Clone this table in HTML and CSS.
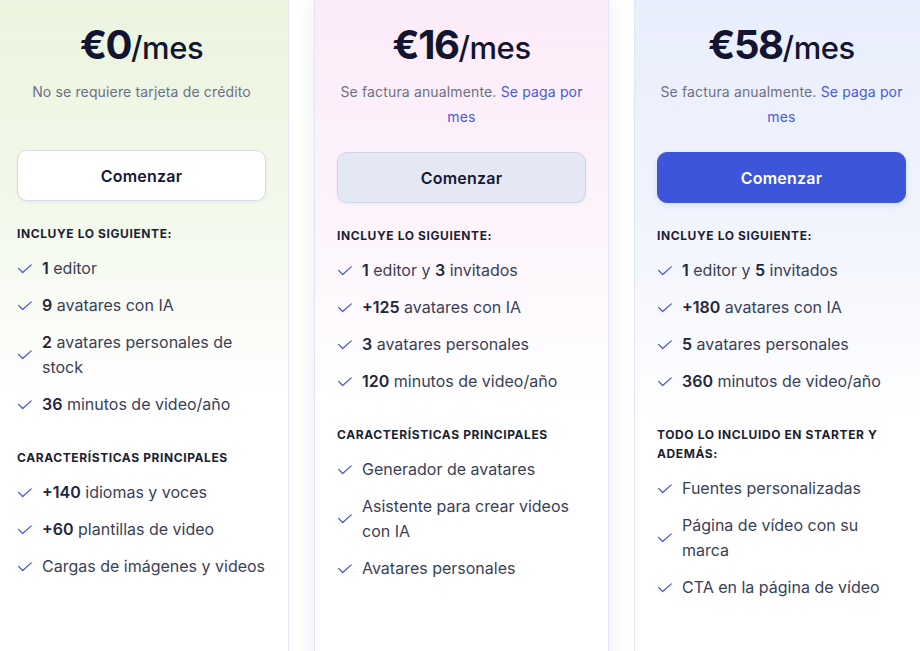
FILE: index.html
```html
<!DOCTYPE html>
<html lang="es">
<head>
<meta charset="utf-8">
<title>Planes</title>
<link rel="stylesheet" href="styles.css">
</head>
<body>
<div class="plans">
  <section class="card card--free">
    <h2 class="price"><span class="amount">€0</span><span class="per">/mes</span></h2>
    <p class="sub sub--single">No se requiere tarjeta de crédito</p>
    <button class="btn btn--light">Comenzar</button>
    <h3 class="group">Incluye lo siguiente:</h3>
    <ul class="feats">
      <li><svg class="chk" viewBox="0 0 15 10"><path d="M0.6 4.4 L5 8.8 L14.2 0.6"/></svg><span><b>1</b> editor</span></li>
      <li><svg class="chk" viewBox="0 0 15 10"><path d="M0.6 4.4 L5 8.8 L14.2 0.6"/></svg><span><b>9</b> avatares con IA</span></li>
      <li><svg class="chk" viewBox="0 0 15 10"><path d="M0.6 4.4 L5 8.8 L14.2 0.6"/></svg><span><b>2</b> avatares personales de stock</span></li>
      <li><svg class="chk" viewBox="0 0 15 10"><path d="M0.6 4.4 L5 8.8 L14.2 0.6"/></svg><span><b>36</b> minutos de video/año</span></li>
    </ul>
    <h3 class="group">Características principales</h3>
    <ul class="feats">
      <li><svg class="chk" viewBox="0 0 15 10"><path d="M0.6 4.4 L5 8.8 L14.2 0.6"/></svg><span><b>+140</b> idiomas y voces</span></li>
      <li><svg class="chk" viewBox="0 0 15 10"><path d="M0.6 4.4 L5 8.8 L14.2 0.6"/></svg><span><b>+60</b> plantillas de video</span></li>
      <li><svg class="chk" viewBox="0 0 15 10"><path d="M0.6 4.4 L5 8.8 L14.2 0.6"/></svg><span>Cargas de imágenes y videos</span></li>
    </ul>
  </section>

  <section class="card card--starter">
    <h2 class="price"><span class="amount">€16</span><span class="per">/mes</span></h2>
    <p class="sub">Se factura anualmente. <a class="link" href="#">Se paga por mes</a></p>
    <button class="btn btn--soft">Comenzar</button>
    <h3 class="group">Incluye lo siguiente:</h3>
    <ul class="feats">
      <li><svg class="chk" viewBox="0 0 15 10"><path d="M0.6 4.4 L5 8.8 L14.2 0.6"/></svg><span><b>1</b> editor y <b>3</b> invitados</span></li>
      <li><svg class="chk" viewBox="0 0 15 10"><path d="M0.6 4.4 L5 8.8 L14.2 0.6"/></svg><span><b>+125</b> avatares con IA</span></li>
      <li><svg class="chk" viewBox="0 0 15 10"><path d="M0.6 4.4 L5 8.8 L14.2 0.6"/></svg><span><b>3</b> avatares personales</span></li>
      <li><svg class="chk" viewBox="0 0 15 10"><path d="M0.6 4.4 L5 8.8 L14.2 0.6"/></svg><span><b>120</b> minutos de video/año</span></li>
    </ul>
    <h3 class="group">Características principales</h3>
    <ul class="feats">
      <li><svg class="chk" viewBox="0 0 15 10"><path d="M0.6 4.4 L5 8.8 L14.2 0.6"/></svg><span>Generador de avatares</span></li>
      <li><svg class="chk" viewBox="0 0 15 10"><path d="M0.6 4.4 L5 8.8 L14.2 0.6"/></svg><span>Asistente para crear videos con IA</span></li>
      <li><svg class="chk" viewBox="0 0 15 10"><path d="M0.6 4.4 L5 8.8 L14.2 0.6"/></svg><span>Avatares personales</span></li>
    </ul>
  </section>

  <section class="card card--pro">
    <h2 class="price"><span class="amount">€58</span><span class="per">/mes</span></h2>
    <p class="sub">Se factura anualmente. <a class="link" href="#">Se paga por mes</a></p>
    <button class="btn btn--primary">Comenzar</button>
    <h3 class="group">Incluye lo siguiente:</h3>
    <ul class="feats">
      <li><svg class="chk" viewBox="0 0 15 10"><path d="M0.6 4.4 L5 8.8 L14.2 0.6"/></svg><span><b>1</b> editor y <b>5</b> invitados</span></li>
      <li><svg class="chk" viewBox="0 0 15 10"><path d="M0.6 4.4 L5 8.8 L14.2 0.6"/></svg><span><b>+180</b> avatares con IA</span></li>
      <li><svg class="chk" viewBox="0 0 15 10"><path d="M0.6 4.4 L5 8.8 L14.2 0.6"/></svg><span><b>5</b> avatares personales</span></li>
      <li><svg class="chk" viewBox="0 0 15 10"><path d="M0.6 4.4 L5 8.8 L14.2 0.6"/></svg><span><b>360</b> minutos de video/año</span></li>
    </ul>
    <h3 class="group">Todo lo incluido en Starter y además:</h3>
    <ul class="feats">
      <li><svg class="chk" viewBox="0 0 15 10"><path d="M0.6 4.4 L5 8.8 L14.2 0.6"/></svg><span>Fuentes personalizadas</span></li>
      <li><svg class="chk" viewBox="0 0 15 10"><path d="M0.6 4.4 L5 8.8 L14.2 0.6"/></svg><span>Página de vídeo con su marca</span></li>
      <li><svg class="chk" viewBox="0 0 15 10"><path d="M0.6 4.4 L5 8.8 L14.2 0.6"/></svg><span>CTA en la página de vídeo</span></li>
    </ul>
  </section>
</div>
</body>
</html>
```
FILE: styles.css
```css
* { box-sizing: border-box; }
html, body { margin: 0; padding: 0; }
body {
  background: #ffffff;
  font-family: Inter, "Noto Sans", "Liberation Sans", sans-serif;
  color: #3a3f57;
  overflow: hidden;
  height: 651px;
}
.plans {
  display: flex;
  gap: 25px;
  margin-left: -6px;
  height: 700px;
}
.card {
  flex: 0 0 295px;
  padding: 21px 22px 0;
  border-left: 1px solid #dfe5f8;
  border-right: 1px solid #dfe5f8;
}
.card--free {
  border-left-color: transparent;
  background: linear-gradient(180deg, #ebf5de 0px, #f2f8ea 200px, #ffffff 400px);
}
.card--starter {
  background: linear-gradient(180deg, #fcebf9 0px, #fdf3fb 200px, #ffffff 400px);
  box-shadow: 0 0 22px rgba(30, 30, 60, 0.08);
  position: relative;
}
.card--pro {
  border-right-color: transparent;
  background: linear-gradient(180deg, #e9eefc 0px, #f1f4fd 220px, #ffffff 420px);
}
.price {
  margin: 0;
  text-align: center;
  line-height: 48px;
  color: #131530;
  white-space: nowrap;
}
.amount {
  font-size: 40px;
  font-weight: 700;
  letter-spacing: -1.5px;
}
.per {
  font-size: 31px;
  font-weight: 500;
  letter-spacing: -0.4px;
}
.sub {
  margin: 4px 0 0;
  min-height: 50px;
  text-align: center;
  font-size: 14px;
  line-height: 25px;
  letter-spacing: 0.15px;
  color: #6b7086;
}
.sub--single { min-height: 48px; }
.link {
  color: #4a5ad9;
  text-decoration: none;
}
.btn {
  display: block;
  width: 100%;
  height: 51px;
  margin-top: 23px;
  border-radius: 10px;
  font-family: inherit;
  font-size: 16px;
  font-weight: 600;
  letter-spacing: 0.2px;
  cursor: pointer;
}
.btn--light {
  background: #ffffff;
  border: 1px solid #d6dbea;
  color: #161833;
  box-shadow: 0 1px 3px rgba(30, 40, 80, 0.06);
}
.btn--soft {
  background: #e4e8f4;
  border: 1px solid #cfd5e6;
  color: #161833;
  box-shadow: 0 1px 3px rgba(30, 40, 80, 0.06);
}
.btn--primary {
  background: #3d55d9;
  border: 1px solid #3d55d9;
  color: #ffffff;
  box-shadow: 0 2px 6px rgba(61, 85, 217, 0.15);
}
.group {
  margin: 23px 0 0;
  font-size: 12px;
  font-weight: 700;
  line-height: 19px;
  letter-spacing: 0.6px;
  text-transform: uppercase;
  color: #1c1e33;
}
.feats + .group { margin-top: 31px; }
.feats {
  list-style: none;
  margin: 13px 0 0;
  padding: 0;
  display: flex;
  flex-direction: column;
  gap: 12px;
}
.feats li {
  display: flex;
  align-items: center;
  gap: 10px;
  font-size: 16px;
  line-height: 25px;
  letter-spacing: 0;
  color: #3a3f57;
}
.feats b {
  font-weight: 600;
  color: #22263b;
}
.chk {
  flex: 0 0 14px;
  width: 14px;
  height: 10px;
  margin-left: 1px;
  fill: none;
  stroke: #4454dc;
  stroke-width: 1.3;
  stroke-linecap: round;
  stroke-linejoin: round;
}
```
